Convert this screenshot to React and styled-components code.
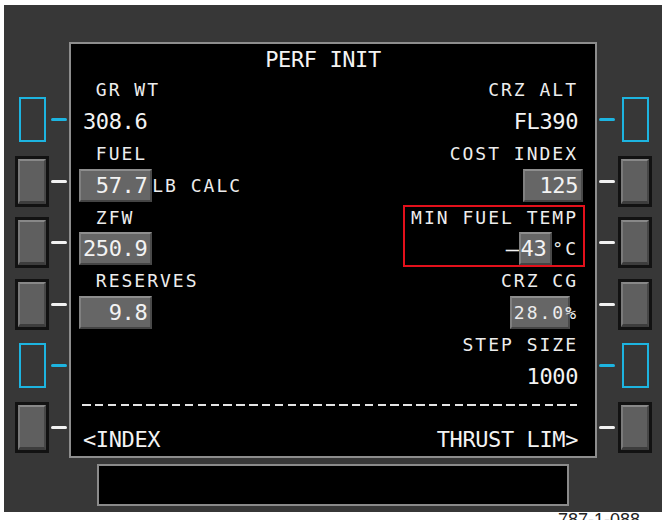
import React from 'react'
import styled, { createGlobalStyle } from 'styled-components'

const GlobalStyle = createGlobalStyle`
  html, body {
    margin: 0;
    padding: 0;
    background: #ffffff;
  }
  body {
    font-family: "DejaVu Sans Mono", "Liberation Mono", monospace;
  }
`

const LINE = 31.8

const App = () => {
  const left = ['lit', 'grey', 'grey', 'grey', 'lit', 'grey']
  const right = ['lit', 'grey', 'grey', 'grey', 'lit', 'grey']

  return (
    <>
      <GlobalStyle />
      <Bezel>
        <Middle>
          <KeyColumn $side="left">
            {left.map((k, i) => (
              <KeySlot key={i} $side="left">
                <KeyFrame $lit={k === 'lit'}>
                  <KeyFace $lit={k === 'lit'} />
                </KeyFrame>
                <Tick $lit={k === 'lit'} />
              </KeySlot>
            ))}
          </KeyColumn>

          <Screen>
            <Line $h={30} $center>
              <Big>PERF INIT</Big>
            </Line>

            <Line>
              <Small>{' GR WT'}</Small>
              <Small>CRZ ALT</Small>
            </Line>
            <Line>
              <Big>308.6</Big>
              <Big>FL390</Big>
            </Line>

            <Line>
              <Small>{' FUEL'}</Small>
              <Small>COST INDEX</Small>
            </Line>
            <Line>
              <Group>
                <Field $edge="left">
                  <Big>{' 57.7'}</Big>
                </Field>
                <Small>LB CALC</Small>
              </Group>
              <Field $edge="right">
                <Big>{' 125'}</Big>
              </Field>
            </Line>

            <Line>
              <Small>{' ZFW'}</Small>
              <Small>MIN FUEL TEMP</Small>
            </Line>
            <Line>
              <Field $edge="left">
                <Big>250.9</Big>
              </Field>
              <Group>
                <Big>–</Big>
                <Field $edge="mid">
                  <Big>43</Big>
                </Field>
                <Small>°C</Small>
              </Group>
            </Line>

            <Line>
              <Small>{' RESERVES'}</Small>
              <Small>CRZ CG</Small>
            </Line>
            <Line>
              <Field $edge="left">
                <Big>{'  9.8'}</Big>
              </Field>
              <Group>
                <Field $edge="cg">
                  <Small>28.0</Small>
                </Field>
                <Small $pull>%</Small>
              </Group>
            </Line>

            <Line>
              <span />
              <Small>STEP SIZE</Small>
            </Line>
            <Line>
              <span />
              <Big>1000</Big>
            </Line>

            <Line>
              <Dashes />
            </Line>
            <Line>
              <Big>{'<INDEX'}</Big>
              <Big>{'THRUST LIM>'}</Big>
            </Line>

            <Callout />
          </Screen>

          <KeyColumn $side="right">
            {right.map((k, i) => (
              <KeySlot key={i} $side="right">
                <Tick $lit={k === 'lit'} />
                <KeyFrame $lit={k === 'lit'}>
                  <KeyFace $lit={k === 'lit'} />
                </KeyFrame>
              </KeySlot>
            ))}
          </KeyColumn>
        </Middle>

        <Scratchpad />
      </Bezel>
      <Caption>787-1-088</Caption>
    </>
  )
}

export default App

const Bezel = styled.div`
  margin: 5px 0 0 4px;
  width: 658px;
  height: 507px;
  box-sizing: border-box;
  padding-top: 37px;
  background: #373737;
`

const Middle = styled.div`
  display: flex;
  height: 416px;
`

const KeyColumn = styled.div`
  width: 65px;
  padding-top: 47px;
  display: flex;
  flex-direction: column;
`

const KeySlot = styled.div`
  height: 63.8px;
  display: flex;
  align-items: center;
  gap: ${p => (p.$side === 'left' ? '2px' : '3px')};
  padding: ${p => (p.$side === 'left' ? '0 2px 0 11px' : '0 0 0 2px')};
`

const KeyFrame = styled.div`
  width: 34px;
  height: 51px;
  display: flex;
  align-items: center;
  justify-content: center;
  background: ${p => (p.$lit ? 'transparent' : '#121212')};
`

const KeyFace = styled.div`
  box-sizing: border-box;
  width: ${p => (p.$lit ? '27px' : '28px')};
  height: 45px;
  ${p =>
    p.$lit
      ? `border: 2px solid #1db4e0;`
      : `
    background: #5f5f5f;
    border-top: 2px solid #888888;
    border-left: 2px solid #7a7a7a;
    border-right: 2px solid #474747;
    border-bottom: 3px solid #3d3d3d;
  `}
`

const Tick = styled.div`
  width: 16px;
  height: 3px;
  border-radius: 2px;
  background: ${p => (p.$lit ? '#1db4e0' : '#f2f2f2')};
`

const Screen = styled.div`
  position: relative;
  width: 528px;
  height: 416px;
  box-sizing: border-box;
  border: 2px solid #8d8d8d;
  background: #000000;
  padding: 0 17px 0 12px;
`

const Line = styled.div`
  height: ${p => (p.$h ? p.$h : LINE)}px;
  display: flex;
  align-items: center;
  justify-content: ${p => (p.$center ? 'center' : 'space-between')};
  padding-right: ${p => (p.$center ? '15px' : '0')};
`

const Group = styled.div`
  display: flex;
  align-items: center;
`

const Big = styled.span`
  white-space: pre;
  font-size: 22px;
  letter-spacing: -0.4px;
  color: #f3f3f3;
`

const Small = styled.span`
  white-space: pre;
  font-size: 18px;
  letter-spacing: 2px;
  color: #ededed;
  margin-left: ${p => (p.$pull ? '-5px' : '0')};
`

const fieldMargin = {
  left: '0 0 0 -4px',
  right: '0 -5px 0 0',
  mid: '0',
  cg: '0',
}

const fieldPadding = {
  left: '0 3px 0 2px',
  right: '0 3px 0 2px',
  mid: '0 4px 0 0',
  cg: '0 3px 0 2px',
}

const Field = styled.span`
  box-sizing: border-box;
  height: 33px;
  display: inline-flex;
  align-items: center;
  background: #666666;
  border-top: 2px solid #8e8e8e;
  border-left: 2px solid #808080;
  border-right: 2px solid #4a4a4a;
  border-bottom: 2px solid #444444;
  margin: ${p => fieldMargin[p.$edge]};
  padding: ${p => fieldPadding[p.$edge]};
`

const Dashes = styled.div`
  width: 100%;
  height: 2px;
  margin: 0 0 6px -1px;
  background: repeating-linear-gradient(
    90deg,
    #e4e4e4 0,
    #e4e4e4 8.5px,
    transparent 8.5px,
    transparent 12.85px
  );
`

const Callout = styled.div`
  position: absolute;
  left: 332px;
  top: 161px;
  width: 182px;
  height: 62px;
  box-sizing: border-box;
  border: 2px solid #e3101b;
`

const Scratchpad = styled.div`
  margin: 6px 0 0 93px;
  width: 472px;
  height: 42px;
  box-sizing: border-box;
  border: 2px solid #8a8a8a;
  background: #000000;
`

const Caption = styled.div`
  margin-left: 558px;
  font-family: "Liberation Sans", Arial, sans-serif;
  font-size: 18px;
  line-height: 16px;
  color: #222222;
  white-space: nowrap;
`
